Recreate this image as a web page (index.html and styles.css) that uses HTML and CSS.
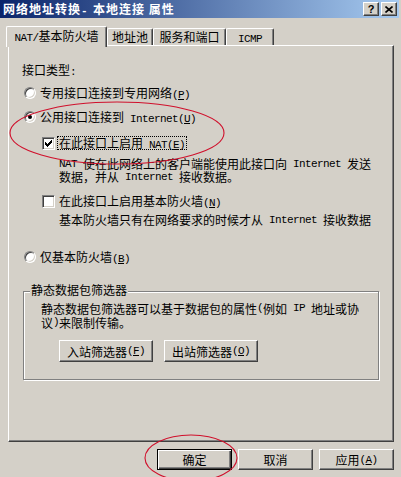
FILE: index.html
```html
<!DOCTYPE html>
<html lang="zh-CN">
<head>
    <meta charset="UTF-8">
    <title>网络地址转换- 本地连接 属性</title>
    <link rel="stylesheet" href="styles.css">
</head>
<body>
    <div class="window">
        <div class="titlebar">
            <span class="title">网络地址转换<span class="en">- </span>本地连接 属性</span>
            <div class="caption-btns">
                <span class="cap-btn help">?</span>
                <span class="cap-btn">
                    <svg width="8" height="7" viewBox="0 0 8 7"><path d="M0.5 0.5 L7.5 6.5 M7.5 0.5 L0.5 6.5" stroke="#000" stroke-width="1.6" fill="none"/></svg>
                </span>
            </div>
        </div>

        <!-- tabs -->
        <div class="tabs">
            <div class="tab active"><span class="en">NAT/</span>基本防火墙</div>
            <div class="tab w46">地址池</div>
            <div class="tab w73">服务和端口</div>
            <div class="tab w48"><span class="en">ICMP</span></div>
        </div>

        <div class="panel">
            <div class="field-label">接口类型<span class="en">:</span></div>

            <div class="opt radio-row r1">
                <span class="radio"></span>
                <span>专用接口连接到专用网络<span class="en">(<u>P</u>)</span></span>
            </div>
            <div class="opt radio-row r2">
                <span class="radio checked"></span>
                <span>公用接口连接到<span class="en"> Internet(<u>U</u>)</span></span>
            </div>

            <div class="opt check-row c1">
                <span class="check">
                    <svg width="7" height="7" viewBox="0 0 7 7" shape-rendering="crispEdges">
                        <rect x="0" y="2" width="1" height="3"/>
                        <rect x="1" y="3" width="1" height="3"/>
                        <rect x="2" y="4" width="1" height="3"/>
                        <rect x="3" y="3" width="1" height="3"/>
                        <rect x="4" y="2" width="1" height="3"/>
                        <rect x="5" y="1" width="1" height="3"/>
                        <rect x="6" y="0" width="1" height="3"/>
                    </svg>
                </span>
                <span class="check-label focused">在此接口上启用<span class="en"> NAT(<u>E</u>)</span></span>
            </div>
            <div class="desc d1">
                <div class="line"><span class="en">NAT </span>使在此网络上的客户端能使用此接口向<span class="en"> Internet </span>发送</div>
                <div class="line">数据，并从<span class="en"> Internet </span>接收数据。</div>
            </div>

            <div class="opt check-row c2">
                <span class="check"></span>
                <span class="check-label">在此接口上启用基本防火墙<span class="en">(<u>N</u>)</span></span>
            </div>
            <div class="desc d2">
                <div class="line">基本防火墙只有在网络要求的时候才从<span class="en"> Internet </span>接收数据</div>
            </div>

            <div class="opt radio-row r3">
                <span class="radio"></span>
                <span>仅基本防火墙<span class="en">(<u>B</u>)</span></span>
            </div>

            <div class="group">
                <div class="group-title">静态数据包筛选器</div>
                <div class="group-text">
                    <div class="line">静态数据包筛选器可以基于数据包的属性<span class="en">(</span>例如<span class="en"> IP </span>地址或协</div>
                    <div class="line">议<span class="en">)</span>来限制传输。</div>
                </div>
                <div class="group-btns">
                    <span class="btn wide">入站筛选器<span class="en">(<u>F</u>)</span></span>
                    <span class="btn wide">出站筛选器<span class="en">(<u>O</u>)</span></span>
                </div>
            </div>
        </div>

        <div class="actions">
            <span class="btn default">确定</span>
            <span class="btn">取消</span>
            <span class="btn">应用<span class="en">(<u>A</u>)</span></span>
        </div>

        <!-- red hand-drawn marks on top of the dialog -->
        <svg class="marks" width="401" height="477" viewBox="0 0 401 477">
            <ellipse cx="117" cy="133" rx="107" ry="31" fill="none" stroke="#d0102c" stroke-width="1.1"/>
            <ellipse cx="191" cy="458" rx="46" ry="23" fill="none" stroke="#d0102c" stroke-width="1.1"/>
        </svg>
    </div>
</body>
</html>
```

FILE: styles.css
```css
body {
    margin: 0;
    padding: 0;
    background: #d4d0c8;
    font-family: "Noto Sans CJK SC", sans-serif;
    font-size: 12px;
    color: #000;
}

.window {
    position: relative;
    width: 401px;
    height: 477px;
    background: #d4d0c8;
    overflow: hidden;
}

.en {
    font-family: "Liberation Mono", monospace;
    font-size: 11px;
    line-height: 0;
    letter-spacing: -0.6px;
}

/* title bar */

.titlebar {
    display: flex;
    align-items: center;
    height: 18px;
    width: 399px;
    padding: 0 2px 0 3px;
    box-sizing: border-box;
    background: linear-gradient(to right, #0a246a, #a6caf0);
}

.title {
    flex: 1;
    color: #fff;
    font-weight: bold;
    letter-spacing: 1px;
    line-height: 18px;
}

.title .en {
    font-weight: bold;
}

.caption-btns {
    display: flex;
    gap: 2px;
}

.cap-btn {
    display: flex;
    align-items: center;
    justify-content: center;
    width: 16px;
    height: 14px;
    box-sizing: border-box;
    background: #d4d0c8;
    border: 1px solid;
    border-color: #fff #404040 #404040 #fff;
    box-shadow: inset -1px -1px 0 #808080;
}

.cap-btn.help {
    font-family: "Liberation Sans", sans-serif;
    font-weight: bold;
    font-size: 11px;
    line-height: 12px;
}

/* tabs */

.tabs {
    display: flex;
    align-items: flex-end;
    margin-top: 8px;
    padding-left: 8px;
}

.tab {
    height: 17px;
    box-sizing: border-box;
    padding-top: 1px;
    line-height: 14px;
    text-align: center;
    background: #d4d0c8;
    border: 1px solid;
    border-bottom: none;
    border-color: #fff #404040 #fff #fff;
    border-radius: 2px 2px 0 0;
    box-shadow: inset -1px 0 0 #808080;
}

.tab.active {
    position: relative;
    z-index: 1;
    width: 101px;
    height: 21px;
    padding-top: 2px;
    margin: 0 0 -2px -2px;
}

.w46 { width: 46px; }
.w73 { width: 73px; }
.w48 { width: 48px; }

/* panel */

.panel {
    width: 386px;
    height: 397px;
    margin-left: 8px;
    box-sizing: border-box;
    padding: 17px 0 0 13px;
    border: 1px solid;
    border-color: #fff #404040 #404040 #fff;
    box-shadow: inset -1px -1px 0 #808080;
}

.field-label {
    height: 14px;
    line-height: 14px;
}

.opt {
    display: flex;
    align-items: center;
    height: 14px;
    line-height: 14px;
}

.radio-row {
    gap: 4px;
    padding-left: 2px;
}

.r1 { margin-top: 9px; }
.r2 { margin-top: 10px; }
.r3 { margin-top: 24px; }

.radio {
    display: flex;
    align-items: center;
    justify-content: center;
    width: 12px;
    height: 12px;
    box-sizing: border-box;
    border-radius: 50%;
    background: #fff;
    border: 1px solid;
    border-color: #808080 #fff #fff #808080;
    box-shadow: inset 1px 1px 0 #404040, inset -1px -1px 0 #d4d0c8;
}

.radio.checked::after {
    content: "";
    width: 4px;
    height: 4px;
    border-radius: 50%;
    background: #000;
}

.check-row {
    gap: 2px;
    padding-left: 20px;
}

.c1 { margin-top: 12px; }
.c2 { margin-top: 11px; }

.check {
    display: flex;
    align-items: center;
    justify-content: center;
    width: 13px;
    height: 13px;
    box-sizing: border-box;
    background: #fff;
    border: 1px solid;
    border-color: #808080 #fff #fff #808080;
    box-shadow: inset 1px 1px 0 #404040, inset -1px -1px 0 #d4d0c8;
}

.check-label {
    padding: 0 1px;
    line-height: 12px;
    border: 1px solid transparent;
}

.check-label.focused {
    border: 1px dotted #000;
}

.line {
    display: flex;
    align-items: center;
    height: 13px;
    white-space: pre;
}

.desc {
    padding-left: 37px;
}

.d1 { margin-top: 7px; }
.d2 { margin-top: 5px; }

/* group box */

.group {
    width: 356px;
    margin: 27px 0 0 1px;
    box-sizing: border-box;
    padding-bottom: 17px;
    border: 1px solid #808080;
    box-shadow: 1px 1px 0 #fff, inset 1px 1px 0 #fff;
}

.group-title {
    width: fit-content;
    margin: -9px 0 0 6px;
    padding: 0 1px;
    line-height: 14px;
    background: #d4d0c8;
}

.group-text {
    margin-top: 4px;
    padding-left: 17px;
}

.group-text .line {
    height: 14px;
}

.group-btns {
    display: flex;
    gap: 11px;
    margin-top: 11px;
    padding-left: 35px;
}

/* buttons */

.btn {
    display: flex;
    align-items: center;
    justify-content: center;
    width: 75px;
    height: 21px;
    box-sizing: border-box;
    background: #d4d0c8;
    border: 1px solid;
    border-color: #fff #404040 #404040 #fff;
    box-shadow: inset -1px -1px 0 #808080;
}

.btn.wide {
    width: 94px;
    height: 22px;
}

.btn.default {
    border: 1px solid #000;
    box-shadow: inset 1px 1px 0 #fff, inset -1px -1px 0 #404040, inset -2px -2px 0 #808080;
}

.actions {
    display: flex;
    justify-content: flex-end;
    gap: 6px;
    margin-top: 7px;
    padding-right: 7px;
}

.marks {
    position: absolute;
    top: 0;
    left: 0;
    pointer-events: none;
}
```
